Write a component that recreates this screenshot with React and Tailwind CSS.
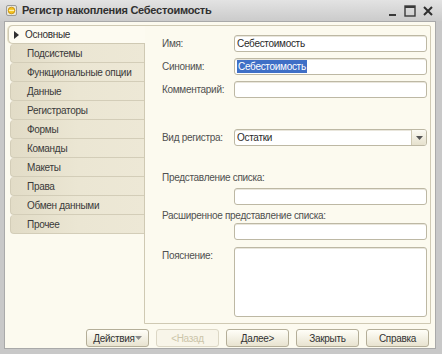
import React from "react";

const tabs = [
  "Подсистемы",
  "Функциональные опции",
  "Данные",
  "Регистраторы",
  "Формы",
  "Команды",
  "Макеты",
  "Права",
  "Обмен данными",
  "Прочее",
];

function Input({ children, className = "" }) {
  return (
    <div
      className={
        "h-[17px] w-[193px] rounded-[3px] border border-[#bdb8a4] bg-white flex items-center px-[2px] text-[#2a2a2a] shadow-[inset_0_1px_0_#e9e6dc] " +
        className
      }
    >
      {children}
    </div>
  );
}

function Btn({ children, disabled = false, className = "" }) {
  return (
    <div
      className={
        "h-[18px] w-[63px] rounded-[3px] border flex items-center justify-center whitespace-nowrap " +
        (disabled
          ? "border-[#dcd7c5] bg-[#f8f5e9] text-[#cbc4a8] "
          : "border-[#b4ae98] bg-gradient-to-b from-[#fffef8] to-[#e8e3d0] text-[#333] ") +
        className
      }
    >
      {children}
    </div>
  );
}

export default function App() {
  return (
    <div
      className="w-[442px] h-[354px] bg-[#c8c8c8] flex flex-col overflow-hidden text-[10px] tracking-[-0.3px]"
      style={{ fontFamily: '"Liberation Sans", Arial, sans-serif' }}
    >
      {/* Title bar */}
      <div className="h-[21px] flex items-center bg-gradient-to-b from-[#e3e3e3] to-[#cbcbcb] pl-[6px] pr-[8px]">
        <svg width="11" height="11" viewBox="0 0 11 11" className="mr-[5px]">
          <rect x="0.5" y="0.5" width="10" height="10" rx="1.5" fill="#e9e6d8" stroke="#9a9a9a" />
          <circle cx="5.5" cy="5.5" r="3.3" fill="#f3c21d" stroke="#c48a0a" strokeWidth="0.8" />
          <rect x="3" y="4.8" width="5" height="1.3" fill="#fff3b0" />
        </svg>
        <span className="text-[11px] font-bold text-[#303030] tracking-[-0.25px] whitespace-nowrap">
          Регистр накопления Себестоимость
        </span>
        <div className="ml-auto flex items-center gap-[6px] text-[#3a3a3a]">
          <svg width="10" height="12" viewBox="0 0 10 12">
            <rect x="1" y="9" width="7" height="2" fill="#3a3a3a" />
          </svg>
          <svg width="12" height="12" viewBox="0 0 12 12">
            <rect x="1" y="1" width="10" height="10" fill="none" stroke="#3a3a3a" strokeWidth="1.4" />
            <rect x="1" y="1" width="10" height="2" fill="#3a3a3a" />
          </svg>
          <svg width="12" height="12" viewBox="0 0 12 12">
            <path d="M2 2 L10 10 M10 2 L2 10" stroke="#2e2e2e" strokeWidth="2" />
          </svg>
        </div>
      </div>

      {/* Client area */}
      <div className="flex-1 ml-[4px] mr-[6px] mb-[5px] border border-[#a9a9a9] bg-[#fcfaef] flex flex-col pt-[3px] pl-[3px] pr-[4px]">
        <div className="flex h-[299px]">
          {/* Tabs */}
          <div className="w-[137px] flex flex-col">
            <div className="relative z-10 -mr-px h-[19px] rounded-l-[5px] border border-r-0 border-[#cfc9b3] bg-[#fdfbf1] flex items-center pl-[5px] text-[#2f2f2f] whitespace-nowrap shadow-[-1px_0_0_#e6e0c9]">
              <svg width="5" height="8" viewBox="0 0 5 8" className="mr-[6px]">
                <path d="M0 0 L5 4 L0 8 Z" fill="#2f2f2f" />
              </svg>
              Основные
            </div>
            {tabs.map((t) => (
              <div
                key={t}
                className="ml-[2px] h-[19px] rounded-l-[4px] border border-t-0 border-r-0 border-[#d3cdb8] bg-gradient-to-r from-[#e2dcc7] via-[#ebe6d3] to-[#ede8d6] flex items-center pl-[16px] text-[#3a3a3a] whitespace-nowrap"
              >
                {t}
              </div>
            ))}
          </div>

          {/* Panel */}
          <div className="flex-1 border border-[#cfc9b3] rounded-tr-[2px] flex flex-col pl-[17px] pr-[3px] text-[#505050] whitespace-nowrap">
            <div className="mt-[9px] flex items-center h-[17px]">
              <span className="w-[72px]">Имя:</span>
              <Input>Себестоимость</Input>
            </div>
            <div className="mt-[6px] flex items-center h-[17px]">
              <span className="w-[72px]">Синоним:</span>
              <Input>
                <span className="bg-[#3f6fc6] text-white px-[1px] leading-[13px]">Себестоимость</span>
              </Input>
            </div>
            <div className="mt-[6px] flex items-center h-[17px]">
              <span className="w-[72px]">Комментарий:</span>
              <Input />
            </div>
            <div className="mt-[31px] flex items-center h-[17px]">
              <span className="w-[72px]">Вид регистра:</span>
              <Input className="pr-0">
                <span className="flex-1">Остатки</span>
                <div className="h-[15px] w-[15px] border-l border-[#cfc9b3] bg-gradient-to-b from-[#fbfaf3] to-[#e6e1cd] flex items-center justify-center rounded-r-[2px]">
                  <svg width="7" height="4" viewBox="0 0 7 4">
                    <path d="M0 0 L7 0 L3.5 4 Z" fill="#555" />
                  </svg>
                </div>
              </Input>
            </div>
            <div className="mt-[24px] h-[14px] flex items-center">Представление списка:</div>
            <div className="mt-[4px] ml-[72px]">
              <Input />
            </div>
            <div className="mt-[3px] h-[14px] flex items-center">Расширенное представление списка:</div>
            <div className="mt-[1px] ml-[72px]">
              <Input />
            </div>
            <div className="mt-[7px] flex items-start">
              <span className="w-[72px] pt-[1px]">Пояснение:</span>
              <Input className="h-[70px]" />
            </div>
          </div>
        </div>

        {/* Buttons */}
        <div className="mt-[5px] flex justify-end gap-[7px] pr-[2px]">
          <Btn className="justify-between pl-[5px] pr-[5px]">
            <span>Действия</span>
            <svg width="7" height="4" viewBox="0 0 7 4">
              <path d="M0 0 L7 0 L3.5 4 Z" fill="#8a8a8a" />
            </svg>
          </Btn>
          <Btn disabled>&lt;Назад</Btn>
          <Btn>Далее&gt;</Btn>
          <Btn>Закрыть</Btn>
          <Btn>Справка</Btn>
        </div>
      </div>
    </div>
  );
}
